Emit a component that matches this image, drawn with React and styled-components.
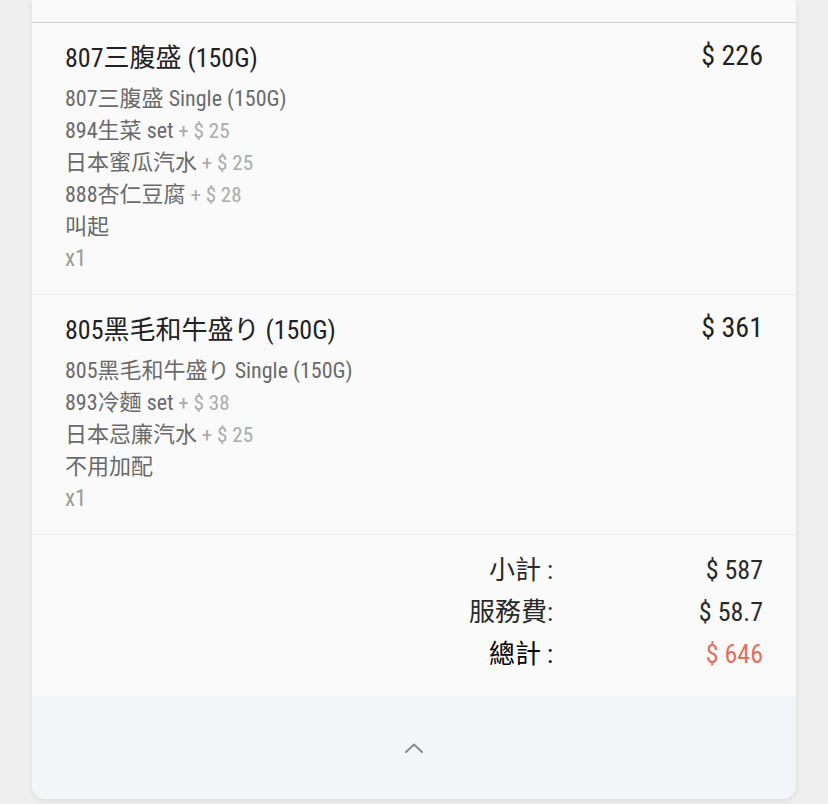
import React from 'react';
import styled, { createGlobalStyle } from 'styled-components';

const items = [
  {
    name: '807三腹盛 (150G)',
    price: 226,
    lines: [
      { text: '807三腹盛 Single (150G)' },
      { text: '894生菜 set', extra: 25 },
      { text: '日本蜜瓜汽水', extra: 25 },
      { text: '888杏仁豆腐', extra: 28 },
      { text: '叫起' },
    ],
    qty: 1,
  },
  {
    name: '805黑毛和牛盛り (150G)',
    price: 361,
    lines: [
      { text: '805黑毛和牛盛り Single (150G)' },
      { text: '893冷麵 set', extra: 38 },
      { text: '日本忌廉汽水', extra: 25 },
      { text: '不用加配' },
    ],
    qty: 1,
  },
];

const totals = [
  { label: '小計 :', value: '$ 587' },
  { label: '服務費:', value: '$ 58.7' },
  { label: '總計 :', value: '$ 646', strong: true },
];

const App = () => {
  return (
    <>
      <GlobalStyle />
      <Page>
        <Card>
          <TopStrip />
          {items.map((item) => (
            <Item key={item.name}>
              <ItemHeader>
                <ItemName>{item.name}</ItemName>
                <ItemPrice>$ {item.price}</ItemPrice>
              </ItemHeader>
              <Details>
                {item.lines.map((line) => (
                  <Line key={line.text}>
                    {line.text}
                    {line.extra && <Extra> + $ {line.extra}</Extra>}
                  </Line>
                ))}
                <Qty>x{item.qty}</Qty>
              </Details>
            </Item>
          ))}
          <Totals>
            {totals.map((row) => (
              <React.Fragment key={row.label}>
                <TotalLabel strong={row.strong}>{row.label}</TotalLabel>
                <TotalValue strong={row.strong}>{row.value}</TotalValue>
              </React.Fragment>
            ))}
          </Totals>
          <Footer>
            <svg width="22" height="14" viewBox="0 0 22 14" fill="none">
              <polyline
                points="3,11 11,3.5 19,11"
                stroke="#8a8a8a"
                strokeWidth="2"
                strokeLinecap="round"
                strokeLinejoin="round"
              />
            </svg>
          </Footer>
        </Card>
      </Page>
    </>
  );
};

const GlobalStyle = createGlobalStyle`
  body {
    margin: 0;
    background: #efefef;
    font-family: "Roboto Condensed", Roboto, "Noto Sans CJK TC", sans-serif;
    font-stretch: condensed;
    font-weight: 400;
  }
`;

const Page = styled.div`
  height: 804px;
  overflow: hidden;
  padding: 0 32px;
`;

const Card = styled.div`
  background: #fafafa;
  border-radius: 0 0 14px 14px;
  box-shadow: 0 2px 6px rgba(0, 0, 0, 0.08);
  overflow: hidden;
`;

const TopStrip = styled.div`
  height: 22px;
  border-bottom: 1px solid #cacaca;
`;

const Item = styled.div`
  padding: 20px 33px 19px 33px;
  border-bottom: 1px solid #ededed;
`;

const ItemHeader = styled.div`
  display: flex;
  justify-content: space-between;
  align-items: flex-start;
  margin-bottom: 10px;
`;

const ItemName = styled.div`
  font-size: 26px;
  line-height: 30px;
  color: #222;
`;

const ItemPrice = styled.div`
  font-size: 28px;
  line-height: 26px;
  color: #222;
`;

const Details = styled.div`
  font-size: 22px;
  line-height: 32px;
  color: #6a6a6a;
`;

const Line = styled.div``;

const Extra = styled.span`
  color: #ababab;
  font-size: 21px;
`;

const Qty = styled.div`
  color: #9a9a9a;
  font-size: 23px;
`;

const Totals = styled.div`
  display: grid;
  grid-template-columns: 1fr 210px;
  padding: 14px 33px 21px 33px;
  font-size: 26px;
  line-height: 42px;
`;

const TotalLabel = styled.div`
  text-align: right;
  color: ${({ strong }) => (strong ? '#000' : '#2a2a2a')};
`;

const TotalValue = styled.div`
  text-align: right;
  color: ${({ strong }) => (strong ? '#e2705f' : '#2a2a2a')};
`;

const Footer = styled.div`
  height: 103px;
  background: #f3f5f9;
  display: flex;
  align-items: center;
  justify-content: center;
`;

export default App;
